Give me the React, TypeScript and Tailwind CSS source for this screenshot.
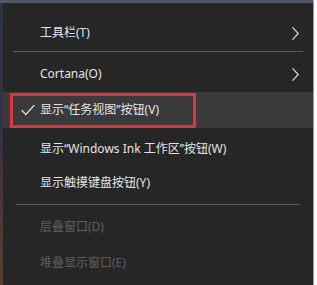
import React from "react";

const font = {
  fontFamily: '"Noto Sans", "Noto Sans CJK SC", sans-serif',
};

function Chevron() {
  return (
    <svg viewBox="0 0 10 16" className="h-[15px] w-[9px]" aria-hidden="true">
      <path
        d="M2 1.5 8 8l-6 6.5"
        fill="none"
        stroke="#d4d4d4"
        strokeWidth="1.4"
        strokeLinecap="round"
        strokeLinejoin="round"
      />
    </svg>
  );
}

function Check() {
  return (
    <svg viewBox="0 0 14 12" className="h-[12px] w-[14px]" aria-hidden="true">
      <path
        d="M1 6.5 4.8 10.5 13 1.5"
        fill="none"
        stroke="#d8d8d8"
        strokeWidth="1.3"
        strokeLinecap="round"
        strokeLinejoin="round"
      />
    </svg>
  );
}

function Row({
  label,
  sub,
  disabled,
  className = "h-[36px]",
}: {
  label: string;
  sub?: boolean;
  disabled?: boolean;
  className?: string;
}) {
  return (
    <div className={`flex items-center pl-[37px] pr-[13px] ${className}`}>
      <span
        className={`flex-1 text-[12px] ${disabled ? "text-[#5f5f5f]" : "text-[#e4e4e4]"}`}
      >
        {label}
      </span>
      {sub && <Chevron />}
    </div>
  );
}

export default function App() {
  return (
    <div className="flex h-[285px] w-[317px] bg-white" style={font}>
      <div className="flex w-[313px] flex-col bg-[#262626]">
        <div className="h-[3px] bg-[#505866]" />
        <div className="flex flex-1">
          <div className="w-[3px] bg-gradient-to-b from-[#2c3448] via-[#3a3040] to-[#5a4030]" />
          <div className="flex flex-1 flex-col pt-[12px]">
            <Row label="工具栏(T)" sub />
            <div className="mx-[10px] mb-[4px] h-px bg-[#5c5c5c]" />
            <Row label="Cortana(O)" sub />
            <div className="flex h-[36px] items-center bg-[#3a3a3a]">
              <div className="ml-[7px] flex h-[35px] w-[186px] items-center border-[3px] border-[#d9363e]">
                <div className="flex w-[27px] justify-center pl-[2px]">
                  <Check />
                </div>
                <span className="text-[12px] text-[#e4e4e4]">
                  显示“任务视图”按钮(V)
                </span>
              </div>
            </div>
            <Row label="显示“Windows Ink 工作区”按钮(W)" className="h-[38px] pt-[4px]" />
            <Row label="显示触摸键盘按钮(Y)" className="h-[34px]" />
            <div className="mx-[13px] my-[4px] h-px bg-[#5c5c5c]" />
            <Row label="层叠窗口(D)" disabled />
            <Row label="堆叠显示窗口(E)" disabled />
          </div>
        </div>
      </div>
      <div className="w-px bg-[#9a9a9a]" />
    </div>
  );
}
